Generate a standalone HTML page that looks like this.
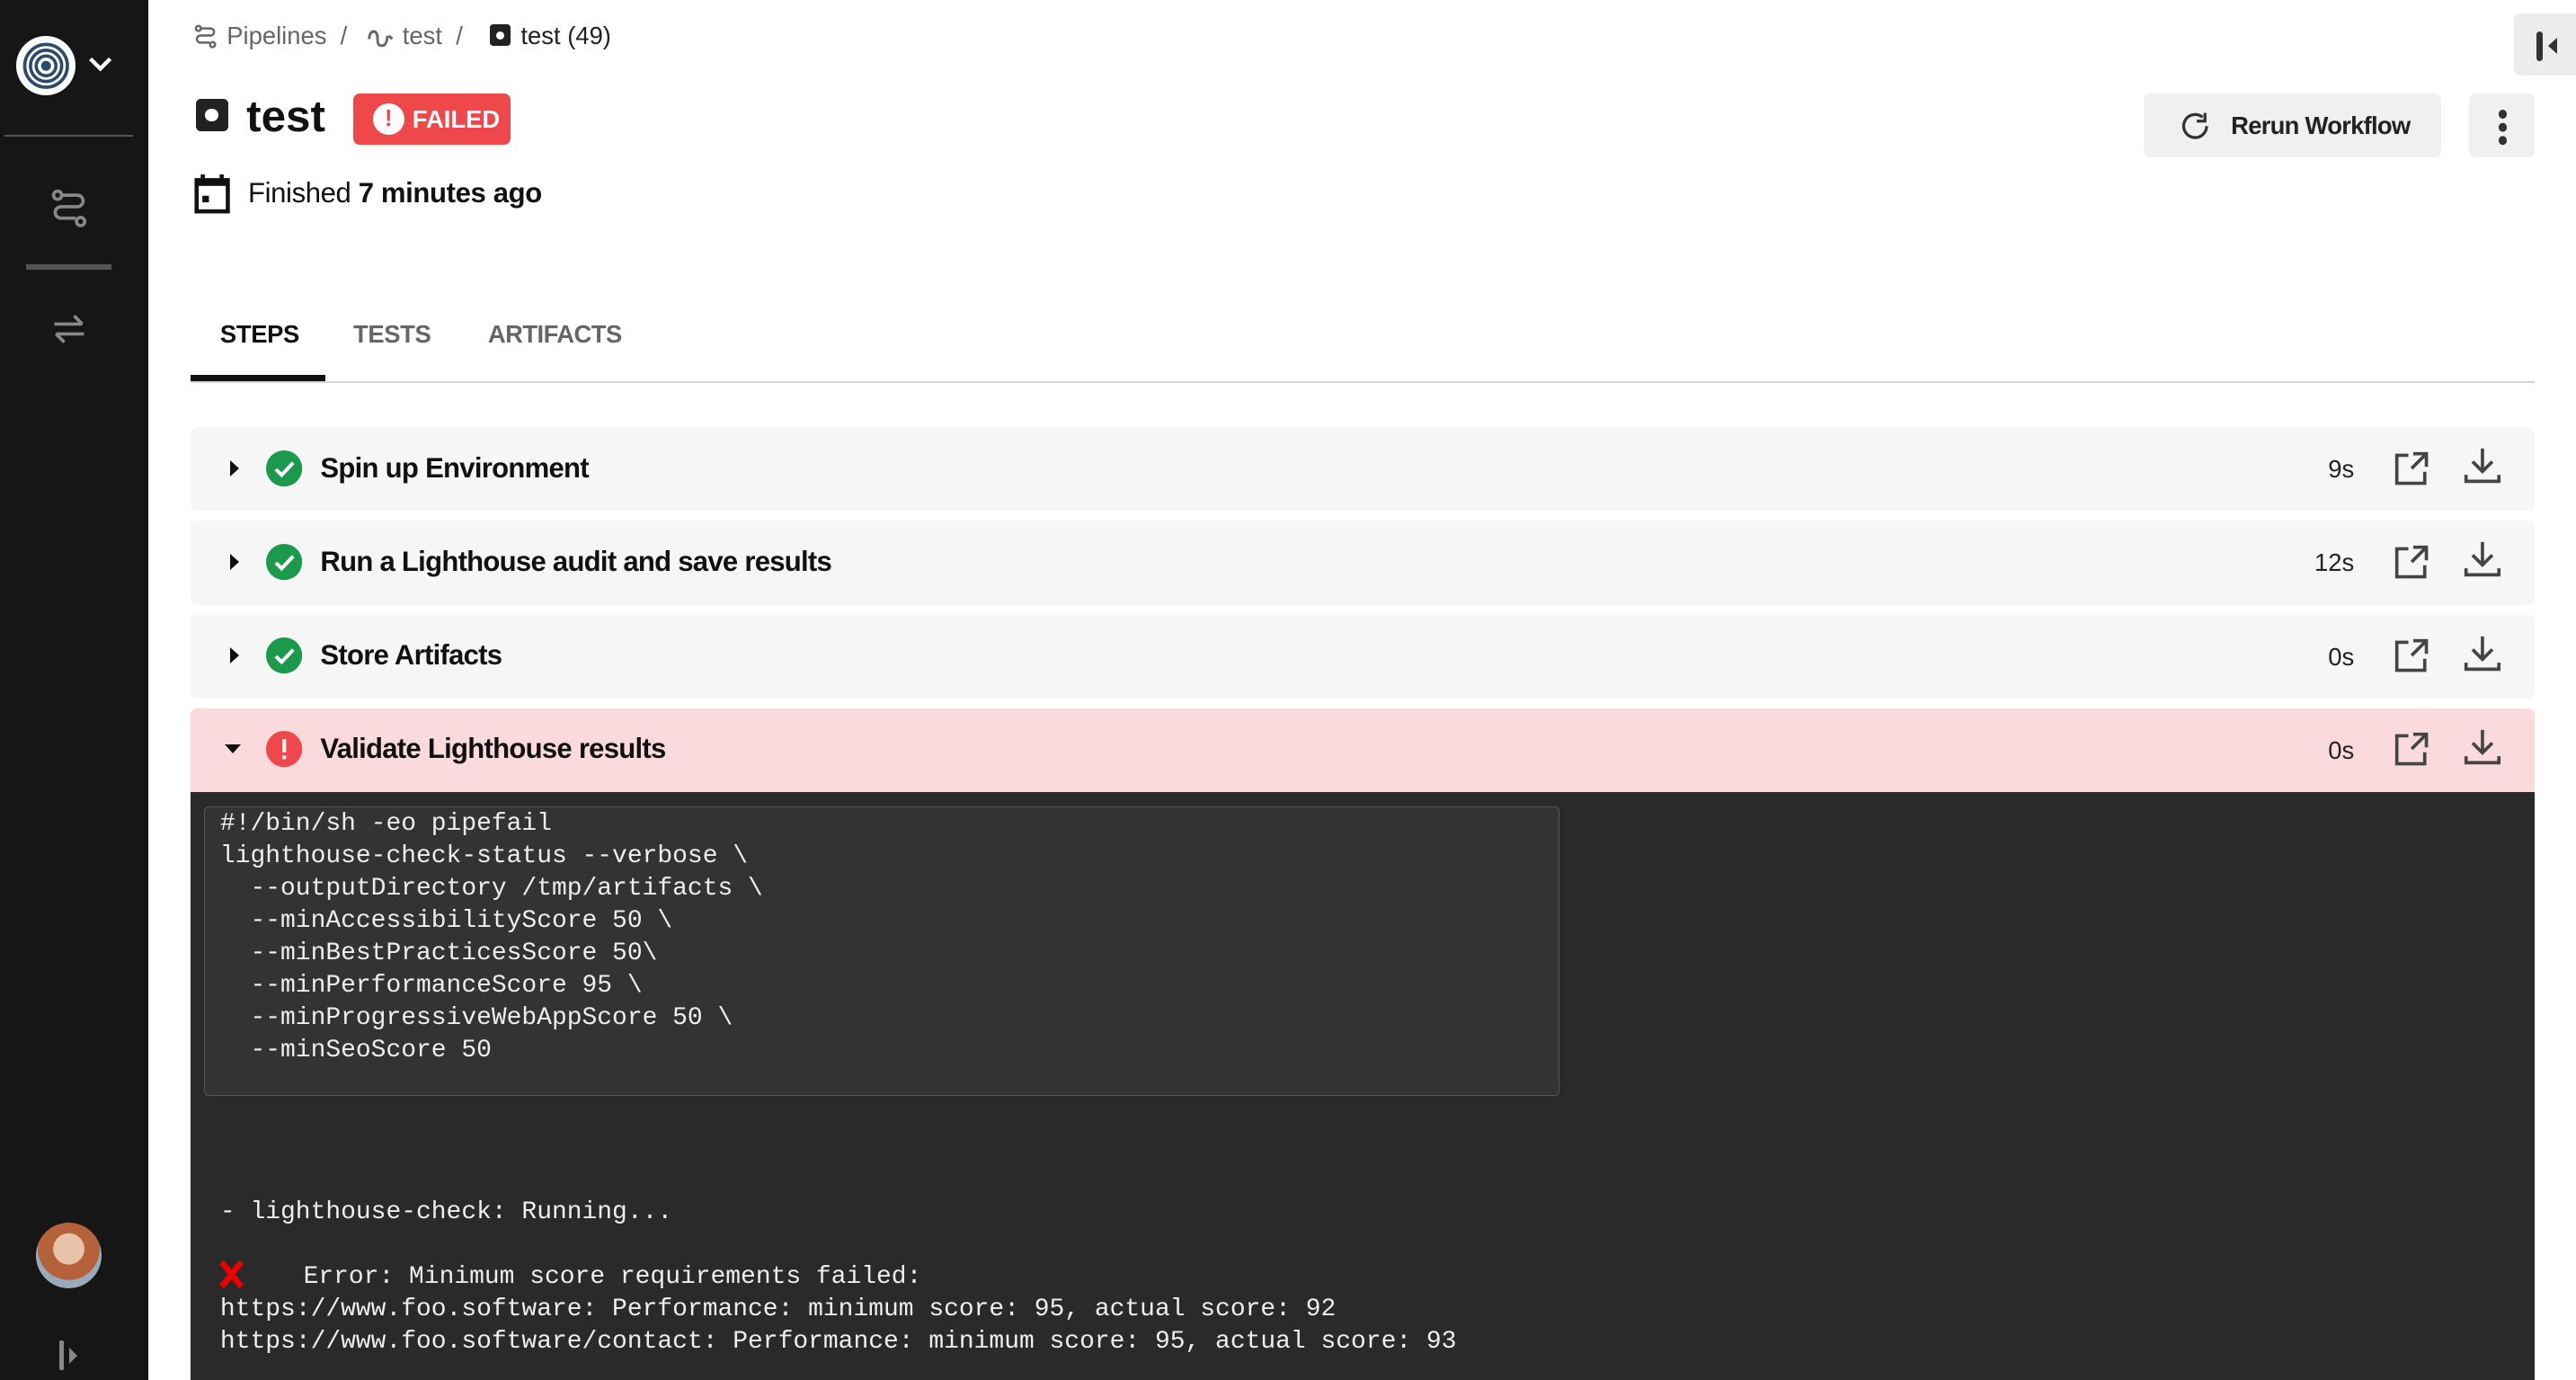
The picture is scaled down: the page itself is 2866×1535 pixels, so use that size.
<!DOCTYPE html>
<html><head><meta charset="utf-8">
<style>
html,body{margin:0;padding:0;background:#fff;overflow:hidden;}
#w{zoom:1.8278;width:1568px;height:840px;position:relative;font-family:"Liberation Sans",sans-serif;color:#111;}
.abs{position:absolute;}
#side{left:0;top:0;width:90px;height:840px;background:#161616;}
.row{position:absolute;left:116px;width:1427px;height:51px;background:#f6f6f6;border-radius:4px;}
.row .tri{position:absolute;left:24px;top:20px;width:0;height:0;border-top:5px solid transparent;border-bottom:5px solid transparent;border-left:6px solid #111;}
.row .ic{position:absolute;left:46px;top:14px;}
.row .t{position:absolute;left:79px;top:15px;font-size:17px;font-weight:bold;letter-spacing:-0.4px;color:#111;}
.row .d{position:absolute;right:110px;top:17px;font-size:15px;color:#222;}
.row .e{position:absolute;right:64px;top:14px;}
.row .dl{position:absolute;right:20px;top:12px;}
pre{margin:0;font-family:"Liberation Mono",monospace;font-size:15.3px;line-height:19.7px;color:#eee;}
</style></head><body><div id="w">
<div id="side" class="abs">
  <div class="abs" style="left:10px;top:22px;width:36px;height:36px;border-radius:50%;background:#fff;"></div>
  <svg class="abs" style="left:12px;top:24px" width="32" height="32" viewBox="0 0 32 32"><g fill="none" stroke="#2c4a6b" stroke-width="2"><circle cx="16" cy="16" r="13"/><circle cx="16" cy="16" r="9.5"/><circle cx="16" cy="16" r="6"/></g><circle cx="16" cy="16" r="3" fill="#2c4a6b"/></svg>
  <svg class="abs" style="left:53px;top:33px" width="16" height="12" viewBox="0 0 16 12"><path d="M2 3l6 6 6-6" fill="none" stroke="#fff" stroke-width="2.4"/></svg>
  <div class="abs" style="left:3px;top:82px;width:78px;height:1px;background:#555;"></div>
  <svg class="abs" style="left:30px;top:114px" width="24" height="26" viewBox="0 0 24 26"><g fill="none" stroke="#888" stroke-width="2"><circle cx="5" cy="5" r="2.5"/><circle cx="19" cy="21" r="2.5"/><path d="M8 5h9a3.5 3.5 0 0 1 0 7H7a3.5 3.5 0 0 0 0 7h9"/></g></svg>
  <div class="abs" style="left:16px;top:161px;width:52px;height:3px;background:#555;"></div>
  <svg class="abs" style="left:30px;top:188px" width="24" height="24" viewBox="0 0 24 24"><g fill="none" stroke="#888" stroke-width="2"><path d="M3 9h17M15 4l5 5"/><path d="M21 15H4M9 20l-5-5"/></g></svg>
  <div class="abs" style="left:22px;top:744px;width:40px;height:40px;border-radius:50%;background:radial-gradient(circle at 50% 40%,#e8c3a8 0 30%,#b5623a 31% 60%,#9ab 61%);"></div>
  <div class="abs" style="left:36px;top:816px;width:3px;height:18px;background:#888;border-radius:1px;"></div>
  <div class="abs" style="left:42px;top:820px;width:0;height:0;border-top:5px solid transparent;border-bottom:5px solid transparent;border-left:5px solid #888;"></div>
</div>

<svg class="abs" style="left:117px;top:14px" width="16" height="16" viewBox="0 0 24 26"><g fill="none" stroke="#666" stroke-width="2.2"><circle cx="5" cy="5" r="2.5"/><circle cx="19" cy="21" r="2.5"/><path d="M8 5h9a3.5 3.5 0 0 1 0 7H7a3.5 3.5 0 0 0 0 7h9"/></g></svg>
<div class="abs" style="left:138px;top:13px;font-size:15px;color:#666;">Pipelines &nbsp;/&nbsp;</div>
<svg class="abs" style="left:224px;top:15px" width="16" height="14" viewBox="0 0 16 14"><path d="M1 9c0-6 5-6 5-1s1 5 3 5 3-3 3-6M13 7l2 2" fill="none" stroke="#666" stroke-width="1.6"/></svg>
<div class="abs" style="left:245px;top:13px;font-size:15px;color:#666;">test &nbsp;/&nbsp;</div>
<div class="abs" style="left:298px;top:15px;width:13px;height:13px;background:#222;border-radius:2px;"><div style="margin:4px;width:5px;height:5px;border-radius:50%;background:#fff"></div></div>
<div class="abs" style="left:317px;top:13px;font-size:15px;color:#222;">test (49)</div>

<div class="abs" style="left:1530px;top:8px;width:38px;height:38px;background:#ececec;border-radius:4px 0 0 4px;"></div>
<div class="abs" style="left:1544px;top:19px;width:4px;height:18px;background:#333;border-radius:2px;"></div>
<div class="abs" style="left:1551px;top:23px;width:0;height:0;border-top:5px solid transparent;border-bottom:5px solid transparent;border-right:6px solid #333;"></div>

<div class="abs" style="left:119px;top:60px;width:20px;height:20px;background:#222;border-radius:3px;"><div style="margin:6px;width:8px;height:8px;border-radius:50%;background:#fff"></div></div>
<div class="abs" style="left:150px;top:55px;font-size:27px;font-weight:bold;">test</div>
<div class="abs" style="left:215px;top:57px;width:96px;height:31px;background:#ee484b;border-radius:4px;"></div>
<div class="abs" style="left:227px;top:63px;width:19px;height:19px;border-radius:50%;background:#fff;color:#ee484b;font-size:14px;font-weight:bold;text-align:center;line-height:19px;">!</div>
<div class="abs" style="left:251px;top:64px;font-size:15px;font-weight:bold;color:#fff;">FAILED</div>

<svg class="abs" style="left:118px;top:106px" width="22" height="24" viewBox="0 0 22 24"><rect x="1.5" y="3.5" width="19" height="19" fill="none" stroke="#111" stroke-width="2.5"/><rect x="1" y="3" width="20" height="4" fill="#111"/><rect x="4" y="0" width="2.5" height="4" fill="#111"/><rect x="15.5" y="0" width="2.5" height="4" fill="#111"/><rect x="5" y="13" width="4" height="4" fill="#111"/></svg>
<div class="abs" style="left:151px;top:108px;font-size:17px;letter-spacing:-0.2px;">Finished <b>7 minutes ago</b></div>

<div class="abs" style="left:1305px;top:57px;width:181px;height:39px;background:#f0f0f0;border-radius:4px;"></div>
<svg class="abs" style="left:1326px;top:67px" width="20" height="20" viewBox="0 0 20 20"><path d="M17 10a7 7 0 1 1-2.5-5.4" fill="none" stroke="#333" stroke-width="1.8"/><path d="M16 2v5h-5" fill="none" stroke="#333" stroke-width="1.8"/></svg>
<div class="abs" style="left:1358px;top:68px;font-size:15px;font-weight:bold;color:#222;letter-spacing:-0.4px;">Rerun Workflow</div>
<div class="abs" style="left:1503px;top:57px;width:40px;height:39px;background:#f0f0f0;border-radius:4px;"></div>
<div class="abs" style="left:1521px;top:67px;width:5px;height:5px;border-radius:50%;background:#333;box-shadow:0 8px 0 #333,0 16px 0 #333;"></div>

<div class="abs" style="left:134px;top:195px;font-size:15px;font-weight:bold;color:#111;letter-spacing:-0.2px;">STEPS</div>
<div class="abs" style="left:215px;top:195px;font-size:15px;font-weight:bold;color:#666;letter-spacing:-0.2px;">TESTS</div>
<div class="abs" style="left:297px;top:195px;font-size:15px;font-weight:bold;color:#666;letter-spacing:-0.3px;">ARTIFACTS</div>
<div class="abs" style="left:116px;top:232px;width:1427px;height:1px;background:#d4d4d4;"></div>
<div class="abs" style="left:116px;top:228px;width:82px;height:4px;background:#111;"></div>

<div class="row" style="top:260px"><div class="tri"></div><svg class="ic" width="22" height="22"><circle cx="11" cy="11" r="11" fill="#1a9a4a"/><path d="M6 11.5l3.5 3.5 7-7.5" fill="none" stroke="#fff" stroke-width="2.2"/></svg><div class="t">Spin up Environment</div><div class="d">9s</div>
<svg class="e" width="22" height="22" viewBox="0 0 22 22"><path d="M9 3H2v17h17v-7" fill="none" stroke="#444" stroke-width="2"/><path d="M12 2h8v8M20 2l-9 9" fill="none" stroke="#444" stroke-width="2"/></svg>
<svg class="dl" width="24" height="24" viewBox="0 0 24 24"><path d="M12 1v14M6 9l6 6 6-6M2 17v4h20v-4" fill="none" stroke="#444" stroke-width="2"/></svg></div>

<div class="row" style="top:317px"><div class="tri"></div><svg class="ic" width="22" height="22"><circle cx="11" cy="11" r="11" fill="#1a9a4a"/><path d="M6 11.5l3.5 3.5 7-7.5" fill="none" stroke="#fff" stroke-width="2.2"/></svg><div class="t">Run a Lighthouse audit and save results</div><div class="d">12s</div>
<svg class="e" width="22" height="22" viewBox="0 0 22 22"><path d="M9 3H2v17h17v-7" fill="none" stroke="#444" stroke-width="2"/><path d="M12 2h8v8M20 2l-9 9" fill="none" stroke="#444" stroke-width="2"/></svg>
<svg class="dl" width="24" height="24" viewBox="0 0 24 24"><path d="M12 1v14M6 9l6 6 6-6M2 17v4h20v-4" fill="none" stroke="#444" stroke-width="2"/></svg></div>

<div class="row" style="top:374px"><div class="tri"></div><svg class="ic" width="22" height="22"><circle cx="11" cy="11" r="11" fill="#1a9a4a"/><path d="M6 11.5l3.5 3.5 7-7.5" fill="none" stroke="#fff" stroke-width="2.2"/></svg><div class="t">Store Artifacts</div><div class="d">0s</div>
<svg class="e" width="22" height="22" viewBox="0 0 22 22"><path d="M9 3H2v17h17v-7" fill="none" stroke="#444" stroke-width="2"/><path d="M12 2h8v8M20 2l-9 9" fill="none" stroke="#444" stroke-width="2"/></svg>
<svg class="dl" width="24" height="24" viewBox="0 0 24 24"><path d="M12 1v14M6 9l6 6 6-6M2 17v4h20v-4" fill="none" stroke="#444" stroke-width="2"/></svg></div>

<div class="row" style="top:431px;background:#fadadc;border-radius:4px 4px 0 0;"><div class="tri" style="left:21px;top:22px;border-left:5px solid transparent;border-right:5px solid transparent;border-top:6px solid #111;border-bottom:0;"></div><svg class="ic" width="22" height="22"><circle cx="11" cy="11" r="11" fill="#ee484b"/><rect x="10" y="5" width="2.2" height="8" fill="#fff"/><rect x="10" y="15" width="2.2" height="2.2" fill="#fff"/></svg><div class="t">Validate Lighthouse results</div><div class="d">0s</div>
<svg class="e" width="22" height="22" viewBox="0 0 22 22"><path d="M9 3H2v17h17v-7" fill="none" stroke="#444" stroke-width="2"/><path d="M12 2h8v8M20 2l-9 9" fill="none" stroke="#444" stroke-width="2"/></svg>
<svg class="dl" width="24" height="24" viewBox="0 0 24 24"><path d="M12 1v14M6 9l6 6 6-6M2 17v4h20v-4" fill="none" stroke="#444" stroke-width="2"/></svg></div>

<div class="abs" style="left:116px;top:482px;width:1427px;height:360px;background:#2a2a2a;"></div>
<div class="abs" style="left:124px;top:491px;width:824px;height:175px;background:#333;border:1px solid #555;border-radius:3px;"></div>
<pre class="abs" style="left:134px;top:492px;">#!/bin/sh -eo pipefail
lighthouse-check-status --verbose \
  --outputDirectory /tmp/artifacts \
  --minAccessibilityScore 50 \
  --minBestPracticesScore 50\
  --minPerformanceScore 95 \
  --minProgressiveWebAppScore 50 \
  --minSeoScore 50</pre>
<pre class="abs" style="left:134px;top:728px;">- lighthouse-check: Running...

<span style="display:inline-block;width:14px;"></span>    Error: Minimum score requirements failed:
https://www.foo.software: Performance: minimum score: 95, actual score: 92
https://www.foo.software/contact: Performance: minimum score: 95, actual score: 93</pre>
<svg class="abs" style="left:133px;top:767px" width="16" height="17" viewBox="0 0 16 17"><path d="M2 1l12 15M14 1L2 16" stroke="#e00" stroke-width="3.6"/></svg>
</div></body></html>
